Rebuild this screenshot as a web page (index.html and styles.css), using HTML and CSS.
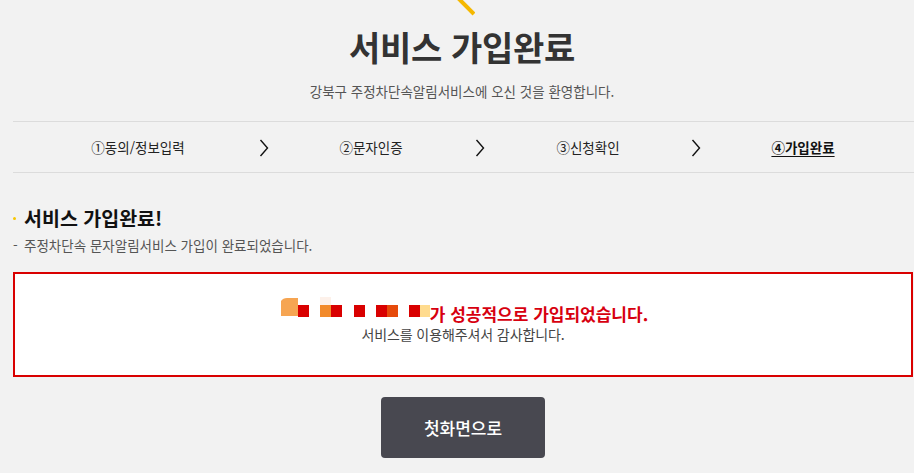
FILE: index.html
```html
<!DOCTYPE html>
<html lang="ko">
<head>
<meta charset="utf-8">
<title>서비스 가입완료</title>
<link rel="stylesheet" href="styles.css">
</head>
<body>
<div class="page">
  <header class="head">
    <svg class="deco" width="30" height="16" viewBox="0 0 30 16"><line x1="13" y1="-2" x2="29" y2="14" stroke="#f5b800" stroke-width="4"/></svg>
    <h1 class="title">서비스 가입완료</h1>
    <p class="subtitle">강북구 주정차단속알림서비스에 오신 것을 환영합니다.</p>
  </header>

  <nav class="steps">
    <span class="step s1">①동의/정보입력</span>
    <span class="chev c1"><svg width="10" height="18" viewBox="0 0 10 18"><polyline points="1.5,1 8.5,9 1.5,17" fill="none" stroke="#111" stroke-width="1.4"/></svg></span>
    <span class="step s2">②문자인증</span>
    <span class="chev c2"><svg width="10" height="18" viewBox="0 0 10 18"><polyline points="1.5,1 8.5,9 1.5,17" fill="none" stroke="#111" stroke-width="1.4"/></svg></span>
    <span class="step s3">③신청확인</span>
    <span class="chev c3"><svg width="10" height="18" viewBox="0 0 10 18"><polyline points="1.5,1 8.5,9 1.5,17" fill="none" stroke="#111" stroke-width="1.4"/></svg></span>
    <span class="step s4 on">④가입완료</span>
  </nav>

  <section class="result">
    <h2 class="sec-title"><span class="dot"></span>서비스 가입완료!</h2>
    <p class="sec-desc"><span class="dash">-</span>주정차단속 문자알림서비스 가입이 완료되었습니다.</p>

    <div class="box">
      <p class="msg"><svg class="mask" width="149" height="21" viewBox="0 0 149 21"><path d="M0 4 Q2 1 6 1 L17 1 L17 19 L0 19 Z" fill="#f6a552"/><rect x="17" y="8" width="11" height="12" fill="#d90000"/><rect x="39" y="0" width="11" height="8" fill="#fdf1ea"/><rect x="39" y="8" width="11" height="12" fill="#f28a2a"/><rect x="50" y="8" width="11" height="12" fill="#d90000"/><rect x="73" y="8" width="11" height="12" fill="#d90000"/><rect x="95" y="8" width="11" height="12" fill="#d90000"/><rect x="106" y="8" width="11" height="12" fill="#e64a0b"/><rect x="128" y="8" width="11" height="12" fill="#d90000"/><rect x="139" y="8" width="10" height="12" fill="#ffdb8e"/></svg><strong>가 성공적으로 가입되었습니다.</strong></p>
      <p class="thanks">서비스를 이용해주셔서 감사합니다.</p>
    </div>

    <div class="actions">
      <a class="btn" href="#">첫화면으로</a>
    </div>
  </section>
</div>
</body>
</html>
```

FILE: styles.css
```css
* { box-sizing: border-box; }
html, body { margin: 0; padding: 0; }
body {
  background: #f2f2f2;
  font-family: "Noto Sans CJK KR", "Noto Sans", sans-serif;
  color: #333;
}
.page {
  padding: 0 1px 0 13px;
  overflow: hidden;
}
.head {
  text-align: center;
  padding-right: 2px;
}
.deco {
  display: block;
  margin: 0 auto;
  position: relative;
  left: -2px;
}
.title {
  margin: 11px 0 0;
  font-size: 34px;
  line-height: 40px;
  font-weight: 700;
  color: #333;
  letter-spacing: -0.3px;
}
.subtitle {
  margin: 14px 0 0;
  font-size: 13.5px;
  line-height: 20px;
  color: #555;
}
.steps {
  margin-top: 20px;
  margin-right: -20px;
  height: 52px;
  border-top: 1px solid #dcdcdc;
  border-bottom: 1px solid #dcdcdc;
  display: grid;
  grid-template-columns: 200px 52px 162px 56px 160px 56px 158px;
  padding-left: 25px;
  align-items: center;
}
.step {
  text-align: center;
  font-size: 13.5px;
  color: #222;
}
.step.on {
  font-weight: 700;
  color: #111;
  text-decoration: underline;
  text-underline-offset: 3px;
}
.chev {
  display: flex;
  justify-content: center;
  padding-top: 1px;
}
.chev svg { display: block; }
.sec-title {
  margin: 32px 0 0;
  font-size: 19.5px;
  line-height: 26px;
  font-weight: 700;
  color: #111;
  display: flex;
  align-items: center;
}
.dot {
  width: 3px;
  height: 3px;
  border-radius: 50%;
  background: #f7c600;
  margin-right: 8px;
}
.sec-desc {
  margin: 5px 0 0;
  font-size: 13.5px;
  line-height: 18px;
  color: #555;
}
.dash {
  display: inline-block;
  width: 11px;
}
.box {
  margin-top: 18px;
  height: 105px;
  border: 2px solid #d90000;
  background: #fff;
  text-align: center;
  padding-top: 23px;
}
.msg {
  margin: 0;
  font-size: 17px;
  line-height: 22px;
  color: #d7000f;
  display: flex;
  justify-content: center;
  align-items: flex-end;
  padding-left: 3px;
}
.mask { display: block; margin-bottom: 7px; }
.msg strong { font-weight: 700; }
.thanks {
  margin: 0;
  font-size: 14px;
  line-height: 18px;
  color: #444;
  letter-spacing: -0.1px;
}
.actions {
  display: flex;
  justify-content: center;
  margin-top: 20px;
}
.btn {
  display: flex;
  align-items: center;
  justify-content: center;
  width: 164px;
  height: 61px;
  border-radius: 4px;
  background: #484850;
  color: #fff;
  font-size: 17px;
  font-weight: 500;
  text-decoration: none;
}
```
